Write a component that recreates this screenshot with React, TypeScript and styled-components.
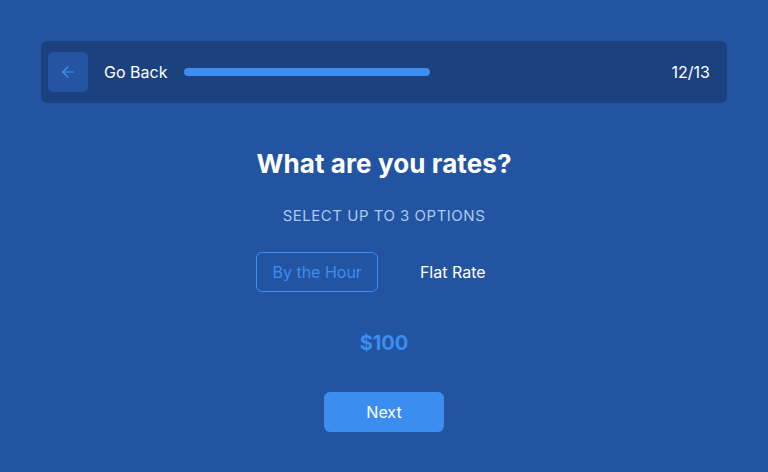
import React from "react";
import styled, { createGlobalStyle } from "styled-components";

const Global = createGlobalStyle`
  html, body { margin: 0; padding: 0; }
  body {
    background: #2354a1;
    font-family: Inter, "Noto Sans", sans-serif;
    -webkit-font-smoothing: antialiased;
  }
`;

const Page = styled.div`
  width: 768px;
  height: 472px;
  box-sizing: border-box;
  padding: 41px 41px 0;
  display: flex;
  flex-direction: column;
  align-items: center;
  background: #2354a1;
`;

const TopBar = styled.div`
  align-self: stretch;
  height: 62px;
  box-sizing: border-box;
  background: #1c417f;
  border-radius: 6px;
  display: flex;
  align-items: center;
  padding: 0 17px 0 7px;
`;

const BackButton = styled.button`
  width: 40px;
  height: 40px;
  border: none;
  border-radius: 5px;
  background: #2454a2;
  display: flex;
  align-items: center;
  justify-content: center;
  padding: 0;
  cursor: pointer;
`;

const BackLabel = styled.span`
  margin-left: 16px;
  color: #ffffff;
  font-size: 16px;
  font-weight: 400;
`;

const Track = styled.div`
  margin-left: 17px;
  width: 246px;
  height: 8px;
  border-radius: 4px;
  background: #3b8ef0;
`;

const Counter = styled.span`
  margin-left: auto;
  color: #ffffff;
  font-size: 16px;
  font-weight: 400;
`;

const Title = styled.h1`
  margin: 43px 0 0;
  color: #ffffff;
  font-size: 26px;
  line-height: 36px;
  font-weight: 700;
  letter-spacing: 0.1px;
`;

const Subtitle = styled.p`
  margin: 25px 0 0;
  color: #a9caf2;
  font-size: 15px;
  line-height: 18px;
  font-weight: 400;
  letter-spacing: 0.5px;
`;

const Options = styled.div`
  margin: 27px 10px 0 0;
  display: flex;
  gap: 26px;
`;

const Option = styled.button<{ $active?: boolean }>`
  height: 40px;
  box-sizing: border-box;
  padding: 0 15px;
  border-radius: 6px;
  border: 1px solid ${(p) => (p.$active ? "#3b8ef0" : "transparent")};
  background: transparent;
  color: ${(p) => (p.$active ? "#3b8ef0" : "#ffffff")};
  font-family: inherit;
  font-size: 16px;
  font-weight: 400;
  cursor: pointer;
`;

const Price = styled.div`
  margin-top: 39px;
  color: #3b8ef0;
  font-size: 20px;
  line-height: 24px;
  font-weight: 700;
`;

const NextButton = styled.button`
  margin-top: 37px;
  width: 120px;
  height: 40px;
  border: none;
  border-radius: 6px;
  background: #3b8ef0;
  color: #ffffff;
  font-family: inherit;
  font-size: 16px;
  font-weight: 400;
  cursor: pointer;
`;

export default function App() {
  return (
    <>
      <Global />
      <Page>
        <TopBar>
          <BackButton aria-label="Go back">
            <svg width="18" height="18" viewBox="0 0 24 24" fill="none" stroke="#4596f4" strokeWidth="1.6" strokeLinecap="round" strokeLinejoin="round">
              <path d="M19 12H5" />
              <path d="M12 19l-7-7 7-7" />
            </svg>
          </BackButton>
          <BackLabel>Go Back</BackLabel>
          <Track />
          <Counter>12/13</Counter>
        </TopBar>
        <Title>What are you rates?</Title>
        <Subtitle>SELECT UP TO 3 OPTIONS</Subtitle>
        <Options>
          <Option $active>By the Hour</Option>
          <Option>Flat Rate</Option>
        </Options>
        <Price>$100</Price>
        <NextButton>Next</NextButton>
      </Page>
    </>
  );
}
